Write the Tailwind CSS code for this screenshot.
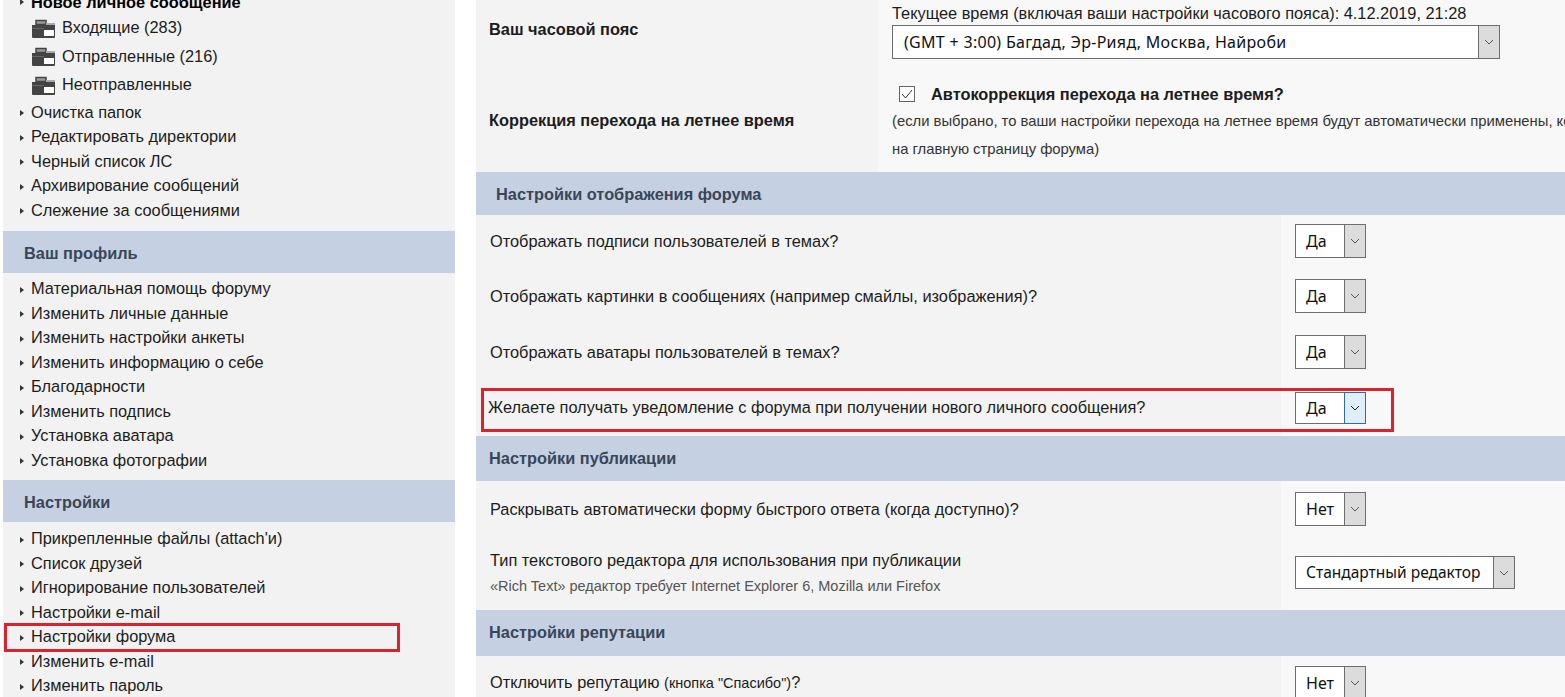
<!DOCTYPE html>
<html lang="ru">

<head>
  <meta charset="UTF-8">
  <title>Настройки форума</title>
  <script src="https://cdn.jsdelivr.net/npm/@tailwindcss/browser@4"></script>
</head>

<body class="bg-white font-['Liberation_Sans',Arial,sans-serif] text-[16.35px] leading-[24px] text-[#1c1c1c]">
  <div class="relative w-[1565px] h-[697px] overflow-hidden flex items-start">

    <!-- Sidebar -->
    <aside class="ml-[3px] w-[452px] h-[720px] -mt-[9px] bg-[#f2f2f2] shrink-0">
      <ul class="pl-[17px]">
        <li class="h-[22px] flex items-center font-bold text-black"><span class="w-0 h-0 border-y-[3.5px] border-y-transparent border-l-[4px] border-l-[#333] mr-[7px]"></span>Новое личное сообщение</li>
      </ul>
      <ul class="pl-[28px]">
        <li class="h-[28.5px] flex items-center gap-[6px]">
          <svg width="25" height="20" viewBox="0 0 25 20" class="mt-[3px]"><path d="M5 1.500h10v4H5z" fill="#9a9a9a" stroke="#444" stroke-width="1.500"/><path d="M15 4h9v2h-9z" fill="#aaa"/><path d="M1 6h23v12a1 1 0 0 1-1 1H2a1 1 0 0 1-1-1z" fill="#444"/><path d="M13 11h10v6H13z" fill="#fff"/><path d="M1 9h12v1H1z" fill="#666"/></svg>Входящие (283)
        </li>
        <li class="h-[28.5px] flex items-center gap-[6px]">
          <svg width="25" height="20" viewBox="0 0 25 20" class="mt-[3px]"><path d="M5 1.500h10v4H5z" fill="#9a9a9a" stroke="#444" stroke-width="1.500"/><path d="M15 4h9v2h-9z" fill="#aaa"/><path d="M1 6h23v12a1 1 0 0 1-1 1H2a1 1 0 0 1-1-1z" fill="#444"/><path d="M13 11h10v6H13z" fill="#fff"/><path d="M1 9h12v1H1z" fill="#666"/></svg>Отправленные (216)
        </li>
        <li class="h-[28.5px] flex items-center gap-[6px]">
          <svg width="25" height="20" viewBox="0 0 25 20" class="mt-[3px]"><path d="M5 1.500h10v4H5z" fill="#9a9a9a" stroke="#444" stroke-width="1.500"/><path d="M15 4h9v2h-9z" fill="#aaa"/><path d="M1 6h23v12a1 1 0 0 1-1 1H2a1 1 0 0 1-1-1z" fill="#444"/><path d="M13 11h10v6H13z" fill="#fff"/><path d="M1 9h12v1H1z" fill="#666"/></svg>Неотправленные
        </li>
      </ul>
      <ul class="pl-[17px] pt-[1px] pb-[9px] [&>li]:h-[24.5px] [&>li]:flex [&>li]:items-center">
        <li><span class="w-0 h-0 border-y-[3.5px] border-y-transparent border-l-[4px] border-l-[#333] mr-[7px] mt-[3px]"></span>Очистка папок</li>
        <li><span class="w-0 h-0 border-y-[3.5px] border-y-transparent border-l-[4px] border-l-[#333] mr-[7px] mt-[3px]"></span>Редактировать директории</li>
        <li><span class="w-0 h-0 border-y-[3.5px] border-y-transparent border-l-[4px] border-l-[#333] mr-[7px] mt-[3px]"></span>Черный список ЛС</li>
        <li><span class="w-0 h-0 border-y-[3.5px] border-y-transparent border-l-[4px] border-l-[#333] mr-[7px] mt-[3px]"></span>Архивирование сообщений</li>
        <li><span class="w-0 h-0 border-y-[3.5px] border-y-transparent border-l-[4px] border-l-[#333] mr-[7px] mt-[3px]"></span>Слежение за сообщениями</li>
      </ul>
      <h3 class="h-[42px] pt-[2px] bg-[#c5d1e2] flex items-center pl-[21px] font-bold text-[#3a4658]">Ваш профиль</h3>
      <ul class="pl-[17px] pt-[3px] pb-[8px] [&>li]:h-[24.5px] [&>li]:flex [&>li]:items-center">
        <li><span class="w-0 h-0 border-y-[3.5px] border-y-transparent border-l-[4px] border-l-[#333] mr-[7px] mt-[3px]"></span>Материальная помощь форуму</li>
        <li><span class="w-0 h-0 border-y-[3.5px] border-y-transparent border-l-[4px] border-l-[#333] mr-[7px] mt-[3px]"></span>Изменить личные данные</li>
        <li><span class="w-0 h-0 border-y-[3.5px] border-y-transparent border-l-[4px] border-l-[#333] mr-[7px] mt-[3px]"></span>Изменить настройки анкеты</li>
        <li><span class="w-0 h-0 border-y-[3.5px] border-y-transparent border-l-[4px] border-l-[#333] mr-[7px] mt-[3px]"></span>Изменить информацию о себе</li>
        <li><span class="w-0 h-0 border-y-[3.5px] border-y-transparent border-l-[4px] border-l-[#333] mr-[7px] mt-[3px]"></span>Благодарности</li>
        <li><span class="w-0 h-0 border-y-[3.5px] border-y-transparent border-l-[4px] border-l-[#333] mr-[7px] mt-[3px]"></span>Изменить подпись</li>
        <li><span class="w-0 h-0 border-y-[3.5px] border-y-transparent border-l-[4px] border-l-[#333] mr-[7px] mt-[3px]"></span>Установка аватара</li>
        <li><span class="w-0 h-0 border-y-[3.5px] border-y-transparent border-l-[4px] border-l-[#333] mr-[7px] mt-[3px]"></span>Установка фотографии</li>
      </ul>
      <h3 class="h-[42px] pt-[2px] bg-[#c5d1e2] flex items-center pl-[21px] font-bold text-[#3a4658]">Настройки</h3>
      <ul class="pl-[17px] pt-[4px] [&>li]:h-[24.5px] [&>li]:flex [&>li]:items-center">
        <li><span class="w-0 h-0 border-y-[3.5px] border-y-transparent border-l-[4px] border-l-[#333] mr-[7px] mt-[3px]"></span>Прикрепленные файлы (attach'и)</li>
        <li><span class="w-0 h-0 border-y-[3.5px] border-y-transparent border-l-[4px] border-l-[#333] mr-[7px] mt-[3px]"></span>Список друзей</li>
        <li><span class="w-0 h-0 border-y-[3.5px] border-y-transparent border-l-[4px] border-l-[#333] mr-[7px] mt-[3px]"></span>Игнорирование пользователей</li>
        <li><span class="w-0 h-0 border-y-[3.5px] border-y-transparent border-l-[4px] border-l-[#333] mr-[7px] mt-[3px]"></span>Настройки e-mail</li>
        <li><span class="w-0 h-0 border-y-[3.5px] border-y-transparent border-l-[4px] border-l-[#333] mr-[7px] mt-[3px]"></span>Настройки форума</li>
        <li><span class="w-0 h-0 border-y-[3.5px] border-y-transparent border-l-[4px] border-l-[#333] mr-[7px] mt-[3px]"></span>Изменить e-mail</li>
        <li><span class="w-0 h-0 border-y-[3.5px] border-y-transparent border-l-[4px] border-l-[#333] mr-[7px] mt-[3px]"></span>Изменить пароль</li>
      </ul>
    </aside>

    <!-- Main -->
    <main class="ml-[21px] w-[1089px] shrink-0">
      <div class="flex h-[172px]">
        <div class="w-[402px] bg-[#f3f3f3] pl-[13px] font-bold">
          <div class="mt-[17px]">Ваш часовой пояс</div>
          <div class="mt-[67px]">Коррекция перехода на летнее время</div>
        </div>
        <div class="flex-1 bg-[#f8f8f8] pl-[14px] overflow-hidden whitespace-nowrap">
          <div class="mt-[4px] h-[18px] leading-[18px]">Текущее время (включая ваши настройки часового пояса): 4.12.2019, 21:28</div>
          <div class="mt-[3px] w-[608px] h-[34px] bg-white border border-[#6e6e6e] flex justify-between">
            <span class="pl-[11px] leading-[32px] font-['Noto_Sans',sans-serif] text-[16px] tracking-[0.3px] text-[#111]">(GMT + 3:00) Багдад, Эр-Рияд, Москва, Найроби</span>
            <span class="w-[21px] bg-[#dcdcdc] border-l border-[#6e6e6e] flex items-center justify-center"><svg width="10" height="6" viewBox="0 0 10 6"><path d="M1 1l4 4 4-4" fill="none" stroke="#555"/></svg></span>
          </div>
          <div class="mt-[25px] flex items-center h-[20px] pl-[7px]">
            <span class="w-[16px] h-[16px] border border-[#666] bg-white flex items-center justify-center"><svg width="12" height="10" viewBox="0 0 12 10"><path d="M1 5l3.500 4L11 1" fill="none" stroke="#333"/></svg></span>
            <b class="ml-[16px]">Автокоррекция перехода на летнее время?</b>
          </div>
          <p class="mt-[3px] text-[14.800px] leading-[28px] text-[#333]">(если выбрано, то ваши настройки перехода на летнее время будут автоматически применены, когда вы зайдёте<br>на главную страницу форума)</p>
        </div>
      </div>

      <h3 class="h-[43px] bg-[#c5d1e2] flex items-center pl-[20px] font-bold text-[#3a4658]">Настройки отображения форума</h3>

      <div class="flex h-[55px]">
        <div class="w-[805px] bg-[#f3f3f3] pl-[14px] pt-[14px]">Отображать подписи пользователей в темах?</div>
        <div class="flex-1 bg-[#f8f8f8] pl-[14px] pt-[9px]">
          <div class="w-[71px] h-[34px] bg-white border border-[#6e6e6e] flex justify-between"><span class="pl-[10px] leading-[32px] font-['Noto_Sans',sans-serif] text-[16px] text-[#111]">Да</span><span class="w-[21px] bg-[#dcdcdc] border-l border-[#6e6e6e] flex items-center justify-center"><svg width="10" height="6" viewBox="0 0 10 6"><path d="M1 1l4 4 4-4" fill="none" stroke="#555"/></svg></span></div>
        </div>
      </div>
      <div class="flex h-[56px]">
        <div class="w-[805px] bg-[#f3f3f3] pl-[14px] pt-[14px]">Отображать картинки в сообщениях (например смайлы, изображения)?</div>
        <div class="flex-1 bg-[#f8f8f8] pl-[14px] pt-[9px]">
          <div class="w-[71px] h-[34px] bg-white border border-[#6e6e6e] flex justify-between"><span class="pl-[10px] leading-[32px] font-['Noto_Sans',sans-serif] text-[16px] text-[#111]">Да</span><span class="w-[21px] bg-[#dcdcdc] border-l border-[#6e6e6e] flex items-center justify-center"><svg width="10" height="6" viewBox="0 0 10 6"><path d="M1 1l4 4 4-4" fill="none" stroke="#555"/></svg></span></div>
        </div>
      </div>
      <div class="flex h-[55px]">
        <div class="w-[805px] bg-[#f3f3f3] pl-[14px] pt-[14px]">Отображать аватары пользователей в темах?</div>
        <div class="flex-1 bg-[#f8f8f8] pl-[14px] pt-[9px]">
          <div class="w-[71px] h-[34px] bg-white border border-[#6e6e6e] flex justify-between"><span class="pl-[10px] leading-[32px] font-['Noto_Sans',sans-serif] text-[16px] text-[#111]">Да</span><span class="w-[21px] bg-[#dcdcdc] border-l border-[#6e6e6e] flex items-center justify-center"><svg width="10" height="6" viewBox="0 0 10 6"><path d="M1 1l4 4 4-4" fill="none" stroke="#555"/></svg></span></div>
        </div>
      </div>
      <div class="flex h-[55px]">
        <div class="w-[805px] bg-[#f3f3f3] pl-[12px] pt-[14px]">Желаете получать уведомление с форума при получении нового личного сообщения?</div>
        <div class="flex-1 bg-[#f8f8f8] pl-[14px] pt-[11px]">
          <div class="w-[71px] h-[32px] bg-white border border-[#6e6e6e] flex justify-between"><span class="pl-[10px] leading-[30px] font-['Noto_Sans',sans-serif] text-[16px] text-[#111]">Да</span><span class="w-[20px] bg-[#deeefb] border border-[#2d6da3] -my-px -mr-px box-content flex items-center justify-center"><svg width="10" height="6" viewBox="0 0 10 6"><path d="M1 1l4 4 4-4" fill="none" stroke="#222"/></svg></span></div>
        </div>
      </div>

      <h3 class="h-[45px] pb-[2px] bg-[#c5d1e2] flex items-center pl-[13px] font-bold text-[#3a4658]">Настройки публикации</h3>

      <div class="flex h-[55px]">
        <div class="w-[805px] bg-[#f3f3f3] pl-[14px] pt-[16px]">Раскрывать автоматически форму быстрого ответа (когда доступно)?</div>
        <div class="flex-1 bg-[#f8f8f8] pl-[14px] pt-[11px]">
          <div class="w-[71px] h-[34px] bg-white border border-[#6e6e6e] flex justify-between"><span class="pl-[10px] leading-[32px] font-['Noto_Sans',sans-serif] text-[16px] text-[#111]">Нет</span><span class="w-[21px] bg-[#dcdcdc] border-l border-[#6e6e6e] flex items-center justify-center"><svg width="10" height="6" viewBox="0 0 10 6"><path d="M1 1l4 4 4-4" fill="none" stroke="#555"/></svg></span></div>
        </div>
      </div>
      <div class="flex h-[74px]">
        <div class="w-[805px] bg-[#f3f3f3] pl-[14px] pt-[12px]">Тип текстового редактора для использования при публикации<p class="mt-[6px] text-[14.500px] text-[#555] leading-[16px]">«Rich Text» редактор требует Internet Explorer 6, Mozilla или Firefox</p></div>
        <div class="flex-1 bg-[#f8f8f8] pl-[14px] pt-[20px]">
          <div class="w-[220px] h-[33px] bg-white border border-[#6e6e6e] flex justify-between"><span class="pl-[10px] leading-[31px] font-['Noto_Sans',sans-serif] text-[15.500px] text-[#111]">Стандартный редактор</span><span class="w-[21px] bg-[#dcdcdc] border-l border-[#6e6e6e] flex items-center justify-center"><svg width="10" height="6" viewBox="0 0 10 6"><path d="M1 1l4 4 4-4" fill="none" stroke="#555"/></svg></span></div>
        </div>
      </div>

      <h3 class="h-[46px] pb-[2px] bg-[#c5d1e2] flex items-center pl-[13px] font-bold text-[#3a4658]">Настройки репутации</h3>

      <div class="flex h-[60px]">
        <div class="w-[805px] bg-[#f3f3f3] pl-[14px] pt-[14px]">Отключить репутацию <span class="text-[14.500px]">(кнопка "Спасибо")</span>?</div>
        <div class="flex-1 bg-[#f8f8f8] pl-[14px] pt-[10px]">
          <div class="w-[71px] h-[34px] bg-white border border-[#6e6e6e] flex justify-between"><span class="pl-[10px] leading-[32px] font-['Noto_Sans',sans-serif] text-[16px] text-[#111]">Нет</span><span class="w-[21px] bg-[#dcdcdc] border-l border-[#6e6e6e] flex items-center justify-center"><svg width="10" height="6" viewBox="0 0 10 6"><path d="M1 1l4 4 4-4" fill="none" stroke="#555"/></svg></span></div>
        </div>
      </div>
    </main>

    <!-- Red annotation boxes -->
    <div class="absolute left-[4px] top-[623px] w-[396px] h-[29px] border-[3px] border-[#d9232e]"></div>
    <div class="absolute left-[481px] top-[388px] w-[913px] h-[44px] border-[3px] border-[#d9232e]"></div>
  </div>
</body>

</html>
